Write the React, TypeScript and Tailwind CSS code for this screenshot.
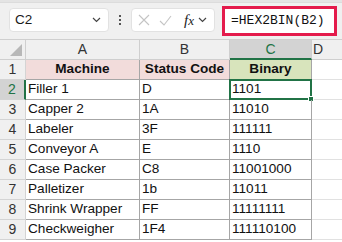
import React from 'react';

const rows = [
  { machine: 'Filler 1', code: 'D', bin: '1101' },
  { machine: 'Capper 2', code: '1A', bin: '11010' },
  { machine: 'Labeler', code: '3F', bin: '111111' },
  { machine: 'Conveyor A', code: 'E', bin: '1110' },
  { machine: 'Case Packer', code: 'C8', bin: '11001000' },
  { machine: 'Palletizer', code: '1b', bin: '11011' },
  { machine: 'Shrink Wrapper', code: 'FF', bin: '11111111' },
  { machine: 'Checkweigher', code: '1F4', bin: '111110100' },
];

const Chevron = ({ className }: { className?: string }) => (
  <svg className={className} width="9" height="6" viewBox="0 0 9 6" fill="none">
    <path d="M1 1l3.5 3.5L8 1" stroke="#444" strokeWidth="1.2" />
  </svg>
);

const App = () => {
  return (
    <div className="w-[342px] h-[242px] overflow-hidden bg-white font-['Liberation_Sans',Arial,sans-serif] text-[13.6px] text-[#111]">
      {/* formula bar */}
      <div className="h-[3px] bg-[#e4e4e4] border-b border-[#dcdcdc]" />
      <div className="h-[37px] bg-[#f0f0f0] flex items-start pt-[5px] border-b border-[#cfcfcf]">
        <div className="ml-[9px] w-[100px] h-[24px] bg-white rounded-[4px] border border-[#e2e2e2] flex items-center justify-between pl-[5px] pr-[7px]">
          <span className="text-[13.5px] text-[#1a1a1a]">C2</span>
          <Chevron />
        </div>
        <div className="w-[22px] h-[24px] flex flex-col items-center justify-center gap-[2px]">
          <div className="w-[2px] h-[2px] bg-[#555]" />
          <div className="w-[2px] h-[2px] bg-[#555]" />
          <div className="w-[2px] h-[2px] bg-[#555]" />
        </div>
        <div className="w-[84px] h-[24px] bg-white rounded-[4px] border border-[#e2e2e2] flex items-center pl-[6px]">
          <svg width="12" height="12" viewBox="0 0 12 12" fill="none">
            <path d="M1 1l10 10M11 1L1 11" stroke="#c4c4c4" strokeWidth="1.1" />
          </svg>
          <svg className="ml-[9px]" width="13" height="11" viewBox="0 0 13 11" fill="none">
            <path d="M1 6l4 4 7-9" stroke="#c4c4c4" strokeWidth="1.1" />
          </svg>
          <span className="ml-[12px] font-['Liberation_Serif',serif] italic text-[15px] text-[#222] leading-none">
            f<span className="text-[13px]">x</span>
          </span>
          <Chevron className="ml-[4px]" />
        </div>
        <div className="ml-[7px] mt-[-2px] w-[115px] h-[30px] border-[3px] border-[#e41b4c] bg-white flex items-center pl-[6px] font-['Liberation_Mono',monospace] text-[13px] text-[#111]">
          =HEX2BIN(B2)
        </div>
      </div>

      {/* sheet */}
      <div className="grid grid-cols-[26px_114px_90px_82px_30px] auto-rows-[20px]">
        {/* column headers */}
        <div className="relative bg-[#f0f0f0] border-r border-b border-[#cfcfcf] overflow-hidden">
          <div className="absolute right-[3px] bottom-[3px] w-0 h-0 border-l-[12px] border-l-transparent border-b-[12px] border-b-[#b8b8b8]" />
        </div>
        <div className="bg-[#f0f0f0] border-r border-b border-[#cfcfcf] flex items-center justify-center text-[#333] text-[14px]">A</div>
        <div className="bg-[#f0f0f0] border-r border-b border-[#cfcfcf] flex items-center justify-center text-[#333] text-[14px]">B</div>
        <div className="bg-[#d3d3d3] border-r border-[#cfcfcf] border-b-2 border-b-[#217346] flex items-center justify-center text-[#217346] text-[14px]">C</div>
        <div className="bg-[#f0f0f0] border-b border-[#cfcfcf] flex items-center pl-[1px] text-[#333] text-[14px]">D</div>

        {/* row 1 */}
        <div className="bg-[#f0f0f0] border-r border-b border-[#d4d4d4] flex items-center justify-center text-[#333] text-[14px]">1</div>
        <div className="bg-[#f2dcdb] border-r border-b border-[#a6a6a6] flex items-center justify-center font-bold">Machine</div>
        <div className="bg-[#f2dcdb] border-r border-b border-[#a6a6a6] flex items-center justify-center font-bold">Status Code</div>
        <div className="bg-[#d8e4bc] border-r border-b border-[#a6a6a6] flex items-center justify-center font-bold">Binary</div>
        <div className="border-b border-[#e1e1e1]" />

        {rows.map((r, i) => {
          const sel = i === 0;
          return (
            <React.Fragment key={i}>
              <div
                className={
                  sel
                    ? 'bg-[#d3d3d3] border-r-2 border-r-[#217346] border-b border-[#d4d4d4] flex items-center justify-center text-[#217346] text-[14px]'
                    : 'bg-[#f0f0f0] border-r border-b border-[#d4d4d4] flex items-center justify-center text-[#333] text-[14px]'
                }
              >
                {i + 2}
              </div>
              <div className="border-r border-b border-[#a6a6a6] flex items-center pl-[2px] whitespace-nowrap">{r.machine}</div>
              <div className="border-r border-b border-[#a6a6a6] flex items-center pl-[2px]">{r.code}</div>
              <div className="relative border-r border-b border-[#a6a6a6] flex items-center pl-[2px]">
                {r.bin}
                {sel && (
                  <>
                    <div className="absolute left-[-1px] top-[-1px] right-[-1px] bottom-[-1px] border-2 border-[#217346]" />
                    <div className="absolute right-[-3px] bottom-[-3px] w-[6px] h-[6px] bg-[#217346] border border-white" />
                  </>
                )}
              </div>
              <div className="border-b border-[#e1e1e1]" />
            </React.Fragment>
          );
        })}
      </div>
    </div>
  );
};

export default App;
